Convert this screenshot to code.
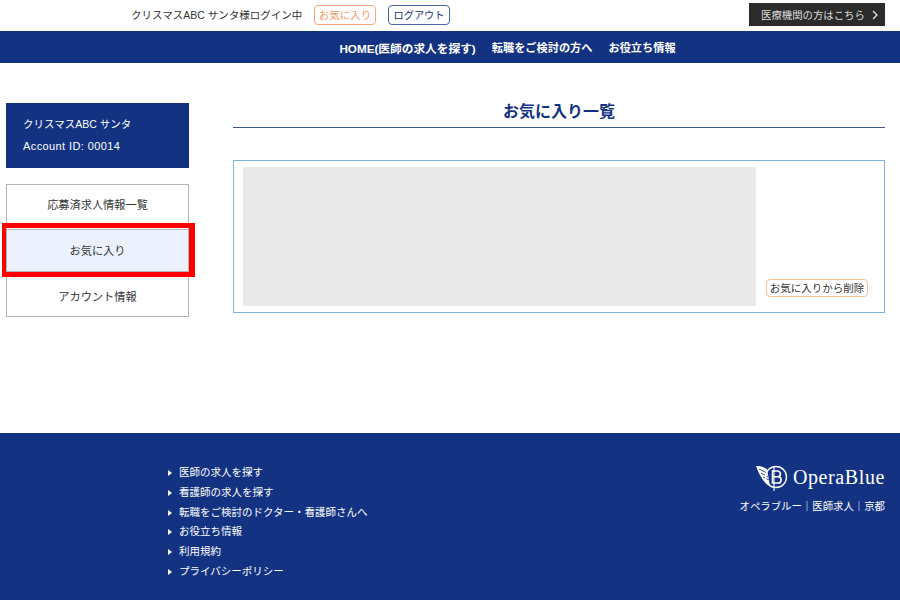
<div class="page">
  <header class="top">
    <span class="login">クリスマスABC サンタ様ログイン中</span>
    <a class="pill fav">お気に入り</a>
    <a class="pill logout">ログアウト</a>
    <a class="med">医療機関の方はこちら<svg width="6" height="10" viewBox="0 0 6 10"><path d="M1 1l4 4-4 4" fill="none" stroke="#eee" stroke-width="1.2"/></svg></a>
  </header>
  <nav class="nav">
    <a class="home">HOME(医師の求人を探す)</a>
    <a>転職をご検討の方へ</a>
    <a>お役立ち情報</a>
  </nav>
  <div class="body">
    <aside class="side">
      <div class="account">
        <div>クリスマスABC サンタ</div>
        <div class="id">Account ID: 00014</div>
      </div>
      <ul class="menu">
        <li class="first">応募済求人情報一覧</li>
        <li class="active">お気に入り<span class="mark"></span></li>
        <li class="last">アカウント情報</li>
      </ul>
    </aside>
    <main class="main">
      <h1>お気に入り一覧</h1>
      <section class="card">
        <div class="thumb"></div>
        <div class="actions"><button>お気に入りから削除</button></div>
      </section>
    </main>
  </div>
  <footer class="footer">
    <ul class="links">
      <li>医師の求人を探す</li>
      <li>看護師の求人を探す</li>
      <li>転職をご検討のドクター・看護師さんへ</li>
      <li>お役立ち情報</li>
      <li>利用規約</li>
      <li>プライバシーポリシー</li>
    </ul>
    <div class="brand">
      <div class="logo">
        <svg width="32" height="28" viewBox="0 0 32 28">
          <path d="M0 2c4 0 8 1 11 3l3 17c-3-1-5-3-7-6-3-4-5-9-7-14z" fill="#fff"/>
          <path d="M3 5l8 4M5 9l7 4M7 13l6 3" stroke="#133382" stroke-width="0.9"/>
          <circle cx="20" cy="13" r="10.500" fill="none" stroke="#fff" stroke-width="1.300"/>
          <path d="M16.500 7h5a2.800 2.800 0 0 1 0 5.800h-5 5.500a3.100 3.100 0 0 1 0 6.200h-5.500z" fill="none" stroke="#fff" stroke-width="1.600"/>
          <path d="M18 2v25" stroke="#fff" stroke-width="1.100"/>
        </svg>
        <span>OperaBlue</span>
      </div>
      <div class="tag">オペラブルー｜医師求人｜京都</div>
    </div>
  </footer>
</div>

<style>
  :global(body) { margin: 0; background: #fff; }
  .page {
    width: 900px; height: 600px; overflow: hidden; display: flex; flex-direction: column;
    font-family: "Liberation Sans", "Noto Sans CJK JP", sans-serif; color: #333;
  }
  .top { height: 30px; flex: none; display: flex; align-items: center; padding: 0 15px 1px 131px; box-sizing: border-box; }
  .login { width: 183px; white-space: nowrap; font-size: 10.5px; }
  .pill { border: 1px solid; border-radius: 4px; height: 20px; box-sizing: border-box; display: flex; align-items: center; justify-content: center; font-size: 10.5px; }
  .fav { width: 62px; border-color: #f5a77c; color: #f39a68; }
  .logout { width: 62px; margin-left: 12px; border-color: #4a62a6; color: #133382; font-size: 10.2px; }
  .med {
    margin-left: auto; width: 136px; height: 23px; background: #2b2b2b; color: #ddd; display: flex; align-items: center;
    gap: 7px; font-size: 10.4px; padding-left: 12px; box-sizing: border-box;
  }
  .nav { height: 32px; flex: none; margin-top: 1px; background: #133382; display: flex; align-items: center; justify-content: center; gap: 16px; color: #fff; font-weight: 700; font-size: 11.2px; padding-left: 115px; box-sizing: border-box; }
  .home { font-size: 11.7px; }
  .body { flex: 1; display: flex; padding: 40px 15px 0 6px; gap: 44px; min-height: 0; }
  .side { width: 183px; flex: none; }
  .account { height: 65px; background: #133382; color: #fff; font-size: 10.5px; box-sizing: border-box; padding: 10px 17px; display: flex; flex-direction: column; justify-content: center; gap: 9px; line-height: 13px; }
  .id { font-size: 11px; letter-spacing: 0.4px; }
  .menu { list-style: none; margin: 16px 0 0; padding: 0; border: 1px solid #b5b5b5; }
  .menu li { height: 44px; box-sizing: border-box; display: flex; align-items: center; justify-content: center; font-size: 11.2px; position: relative; }
  .menu .first { padding-bottom: 7px; }
  .menu .last { padding-top: 4px; }
  .menu .active { height: 43px; padding-bottom: 2px; background: #ebf2fd; border-top: 1px solid #b5b5b5; border-bottom: 1px solid #b5b5b5; }
  .mark { position: absolute; left: -5px; right: -7px; top: -7px; bottom: -6px; border-style: solid; border-color: #f00; border-width: 5px 6px 5px 4px; }
  .main { flex: 1; min-width: 0; }
  h1 { margin: 0; height: 24px; border-bottom: 1px solid #3b55a0; color: #133382; font-size: 16px; line-height: 18px; text-align: center; font-weight: 700; }
  .card { margin-top: 32px; height: 153px; border: 1px solid #7fb0ea; box-sizing: border-box; display: flex; padding: 6px 16px 6px 9px; gap: 10px; }
  .thumb { width: 513px; height: 139px; background: #e9e9e9; flex: none; }
  .actions { flex: 1; display: flex; align-items: flex-end; }
  button { width: 102px; height: 18px; padding: 0 0 1px; margin-bottom: 9px; background: #fff; border: 1px solid #f5c592; border-radius: 4px; font: inherit; font-size: 10.5px; color: #333; white-space: nowrap; }
  .footer { height: 167px; flex: none; background: #133382; color: #fff; display: flex; justify-content: space-between; padding: 0 15px 0 168px; box-sizing: border-box; }
  .links { list-style: none; margin: 30px 0 0; padding: 0; font-size: 10.5px; line-height: 19.800px; }
  .links li { position: relative; padding-left: 11px; }
  .links li::before { content: ""; position: absolute; left: 0; top: 7px; border-left: 4px solid #fff; border-top: 3px solid transparent; border-bottom: 3px solid transparent; }
  .brand { margin-top: 30px; display: flex; flex-direction: column; align-items: flex-end; }
  .logo { display: flex; align-items: center; gap: 5px; height: 29px; }
  .logo span { font-family: "Liberation Serif", serif; font-size: 20px; letter-spacing: 0.6px; line-height: 29px; }
  .tag { font-size: 10.4px; margin-top: 6px; white-space: nowrap; }
</style>
